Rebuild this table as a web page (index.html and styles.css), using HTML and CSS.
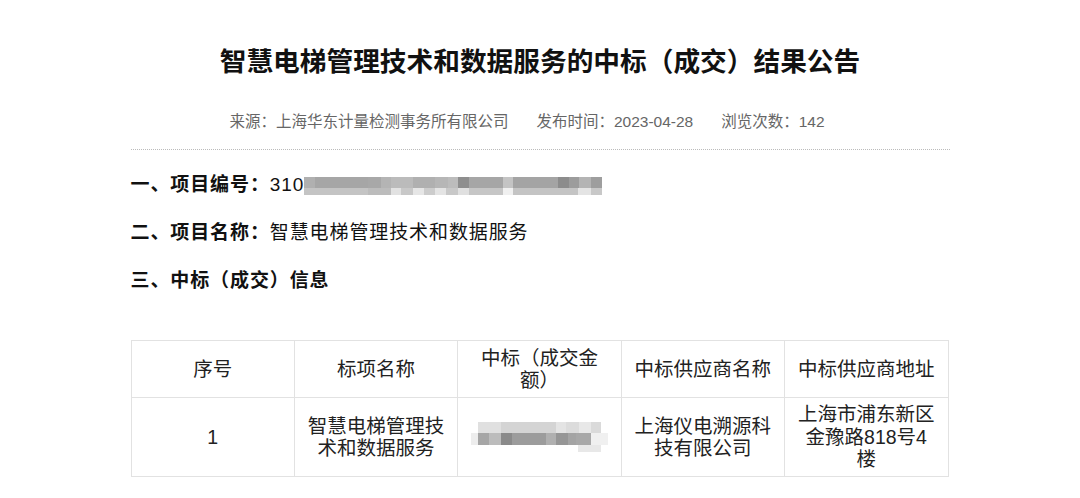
FILE: index.html
```html
<!DOCTYPE html>
<html lang="zh-CN">
<head>
<meta charset="utf-8">
<title>智慧电梯管理技术和数据服务的中标（成交）结果公告</title>
<link rel="stylesheet" href="styles.css">
</head>
<body>
<div class="page">
  <h1 class="title">智慧电梯管理技术和数据服务的中标（成交）结果公告</h1>
  <div class="meta">
    <span>来源：上海华东计量检测事务所有限公司</span>
    <span>发布时间：2023-04-28</span>
    <span>浏览次数：142</span>
  </div>
  <div class="divider"></div>
  <div class="item"><b>一、项目编号：</b><span>310</span><span class="mosaic mosaic-code"></span></div>
  <div class="item"><b>二、项目名称：</b><span>智慧电梯管理技术和数据服务</span></div>
  <div class="item"><b>三、中标（成交）信息</b></div>
  <table class="result">
    <tr>
      <td>序号</td>
      <td>标项名称</td>
      <td>中标（成交金额）</td>
      <td>中标供应商名称</td>
      <td>中标供应商地址</td>
    </tr>
    <tr>
      <td>1</td>
      <td>智慧电梯管理技术和数据服务</td>
      <td><span class="mosaic mosaic-amount"></span></td>
      <td>上海仪电溯源科技有限公司</td>
      <td>上海市浦东新区金豫路818号4楼</td>
    </tr>
  </table>
</div>
</body>
</html>
```
FILE: styles.css
```css
html, body {
  margin: 0;
  padding: 0;
  background: #fff;
}
body {
  font-family: "Liberation Sans", "Noto Sans CJK SC", sans-serif;
  color: #111;
}
.page {
  width: 819px;
  margin: 0 auto;
  padding-top: 44px;
}
.title {
  margin: 0;
  font-size: 26.7px;
  line-height: 36px;
  font-weight: 700;
  text-align: center;
  color: #111;
}
.meta {
  margin-top: 31px;
  padding-right: 26px;
  display: flex;
  justify-content: center;
  gap: 28px;
  font-size: 15.5px;
  line-height: 22px;
  color: #666;
}
.divider {
  margin-top: 16px;
  border-top: 1px dotted #bbb;
}
.item {
  display: flex;
  align-items: center;
  font-size: 19px;
  line-height: 26px;
  height: 26px;
  margin-top: 22px;
  letter-spacing: 0.9px;
  color: #111;
}
.item b {
  font-weight: 700;
}
.mosaic {
  display: inline-block;
}
.mosaic-code {
  width: 298px;
  height: 18px;
  margin-top: 1px;
  background:
    linear-gradient(to right,
      #b0b0b0 0 11px, #a6a6a6 11px 64px, #a8a8a8 64px 77px, #b4b4b4 77px 87px,
      #bbbbbb 87px 109px, #b0b0b0 109px 131px, #b6b6b6 131px 144px, #bcbcbc 144px 154px,
      #8e8e8e 154px 165px, #a6a6a6 165px 199px, #c4c4c4 199px 209px, #a4a4a4 209px 254px,
      #8c8c8c 254px 265px, #9c9c9c 265px 275px, #b4b4b4 275px 287px, #9e9e9e 287px 298px) top / 100% 11px no-repeat,
    linear-gradient(to right,
      #c4c4c4 0 64px, #bcbcbc 64px 87px, #e2e2e2 87px 97px, #c8c8c8 97px 109px,
      #e6e6e6 109px 120px, #cccccc 120px 131px, #e4e4e4 131px 142px, #c8c8c8 142px 154px,
      #e0e0e0 154px 165px, #c6c6c6 165px 199px, #f0f0f0 199px 209px, #c4c4c4 209px 274px,
      #e4e4e4 274px 287px, #c8c8c8 287px 298px) bottom / 100% 7px no-repeat;
}
.result {
  margin-top: 46px;
  width: 818px;
  border-collapse: collapse;
  table-layout: fixed;
  font-size: 19.5px;
  line-height: 22.5px;
  color: #222;
}
.result td {
  border: 1px solid #e2e2e2;
  text-align: center;
  vertical-align: middle;
  padding: 5px 11px;
  height: 46px;
}
.result tr + tr td {
  height: 68px;
}
.mosaic-amount {
  width: 137px;
  height: 30px;
  vertical-align: middle;
  background:
    linear-gradient(to right,
      #fff 0 7px, #e0e0e0 7px 30px, #d4d4d4 30px 85px, #e4e4e4 85px 95px,
      #dcdcdc 95px 108px, #e8e8e8 108px 120px, #dadada 120px 130px, #fff 130px 137px) top / 100% 11px no-repeat,
    linear-gradient(to right,
      #ededed 0 7px, #a6a6a6 7px 18px, #bcbcbc 18px 30px, #8a8a8a 30px 41px,
      #9c9c9c 41px 75px, #b0b0b0 75px 85px, #969696 85px 97px, #a4a4a4 97px 105px,
      #a8a8a8 105px 120px, #f0f0f0 120px 137px) 0 11px / 100% 12px no-repeat,
    linear-gradient(to right,
      #fff 0 107px, #e8e8e8 107px 130px, #fff 130px 137px) bottom / 100% 7px no-repeat;
}
```
